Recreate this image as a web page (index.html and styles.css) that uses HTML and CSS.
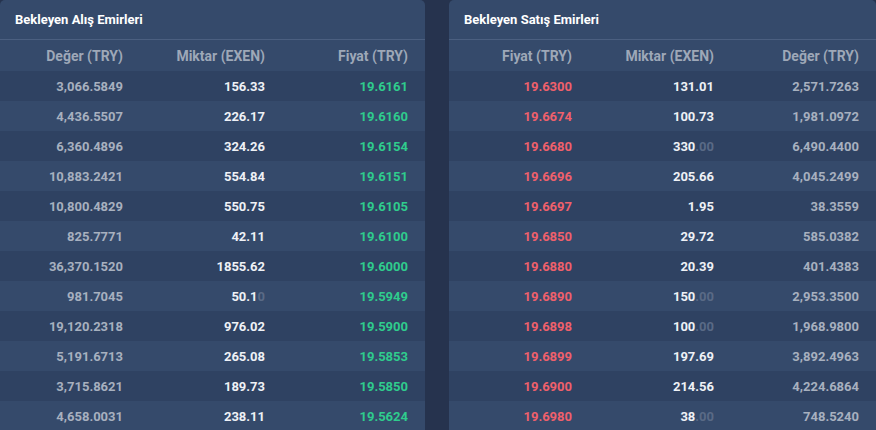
FILE: index.html
```html
<!DOCTYPE html>
<html lang="tr">
<head>
<meta charset="utf-8">
<title>Bekleyen Emirler</title>
<link rel="stylesheet" href="styles.css">
</head>
<body>
<div class="page">
  <section class="panel">
    <div class="panel-title">Bekleyen Alış Emirleri</div>
    <div class="table">
      <div class="row head"><span>Değer (TRY)</span><span>Miktar (EXEN)</span><span>Fiyat (TRY)</span></div>
      <div class="row"><span class="val">3,066.5849</span><span class="amt">156.33</span><span class="buy">19.6161</span></div>
      <div class="row"><span class="val">4,436.5507</span><span class="amt">226.17</span><span class="buy">19.6160</span></div>
      <div class="row"><span class="val">6,360.4896</span><span class="amt">324.26</span><span class="buy">19.6154</span></div>
      <div class="row"><span class="val">10,883.2421</span><span class="amt">554.84</span><span class="buy">19.6151</span></div>
      <div class="row"><span class="val">10,800.4829</span><span class="amt">550.75</span><span class="buy">19.6105</span></div>
      <div class="row"><span class="val">825.7771</span><span class="amt">42.11</span><span class="buy">19.6100</span></div>
      <div class="row"><span class="val">36,370.1520</span><span class="amt">1855.62</span><span class="buy">19.6000</span></div>
      <div class="row"><span class="val">981.7045</span><span class="amt">50.1<i class="dim">0</i></span><span class="buy">19.5949</span></div>
      <div class="row"><span class="val">19,120.2318</span><span class="amt">976.02</span><span class="buy">19.5900</span></div>
      <div class="row"><span class="val">5,191.6713</span><span class="amt">265.08</span><span class="buy">19.5853</span></div>
      <div class="row"><span class="val">3,715.8621</span><span class="amt">189.73</span><span class="buy">19.5850</span></div>
      <div class="row"><span class="val">4,658.0031</span><span class="amt">238.11</span><span class="buy">19.5624</span></div>
    </div>
  </section>
  <section class="panel">
    <div class="panel-title">Bekleyen Satış Emirleri</div>
    <div class="table">
      <div class="row head"><span>Fiyat (TRY)</span><span>Miktar (EXEN)</span><span>Değer (TRY)</span></div>
      <div class="row"><span class="sell">19.6300</span><span class="amt">131.01</span><span class="val">2,571.7263</span></div>
      <div class="row"><span class="sell">19.6674</span><span class="amt">100.73</span><span class="val">1,981.0972</span></div>
      <div class="row"><span class="sell">19.6680</span><span class="amt">330<i class="dim">.00</i></span><span class="val">6,490.4400</span></div>
      <div class="row"><span class="sell">19.6696</span><span class="amt">205.66</span><span class="val">4,045.2499</span></div>
      <div class="row"><span class="sell">19.6697</span><span class="amt">1.95</span><span class="val">38.3559</span></div>
      <div class="row"><span class="sell">19.6850</span><span class="amt">29.72</span><span class="val">585.0382</span></div>
      <div class="row"><span class="sell">19.6880</span><span class="amt">20.39</span><span class="val">401.4383</span></div>
      <div class="row"><span class="sell">19.6890</span><span class="amt">150<i class="dim">.00</i></span><span class="val">2,953.3500</span></div>
      <div class="row"><span class="sell">19.6898</span><span class="amt">100<i class="dim">.00</i></span><span class="val">1,968.9800</span></div>
      <div class="row"><span class="sell">19.6899</span><span class="amt">197.69</span><span class="val">3,892.4963</span></div>
      <div class="row"><span class="sell">19.6900</span><span class="amt">214.56</span><span class="val">4,224.6864</span></div>
      <div class="row"><span class="sell">19.6980</span><span class="amt">38<i class="dim">.00</i></span><span class="val">748.5240</span></div>
    </div>
  </section>
</div>
</body>
</html>
```

FILE: styles.css
```css
html, body {
  margin: 0;
  padding: 0;
  background: #26334e;
  overflow: hidden;
}
body {
  font-family: Roboto, "Liberation Sans", sans-serif;
}
.page {
  display: grid;
  grid-template-columns: 425px 427px;
  column-gap: 24px;
  width: 876px;
  height: 430px;
}
.panel {
  background: #354a6b;
  border-radius: 5px 5px 0 0;
  overflow: hidden;
}
.panel-title {
  height: 40px;
  box-sizing: border-box;
  padding: 12px 0 0 15px;
  font-size: 13px;
  font-weight: 700;
  color: #ffffff;
  line-height: 16px;
  border-bottom: 1px solid #4b5f80;
}
.table {
  display: flex;
  flex-direction: column;
}
.row {
  display: grid;
  grid-template-columns: 142px 142px 1fr;
  height: 30px;
  align-items: center;
  font-size: 13px;
  font-weight: 700;
}
.row span {
  text-align: right;
  padding-right: 19px;
}
.row span:last-child {
  padding-right: 17px;
}
.row.head {
  height: 31px;
  font-size: 14px;
  font-weight: 700;
  color: #9ea8b8;
}
.row:nth-child(even) {
  background: #2f4262;
}
.val { color: #a7b0bf; }
.amt { color: #eef1f6; }
.buy { color: #2fcc8d; }
.sell { color: #f0606b; }
.dim {
  font-style: normal;
  color: #5a6a86;
}
```
